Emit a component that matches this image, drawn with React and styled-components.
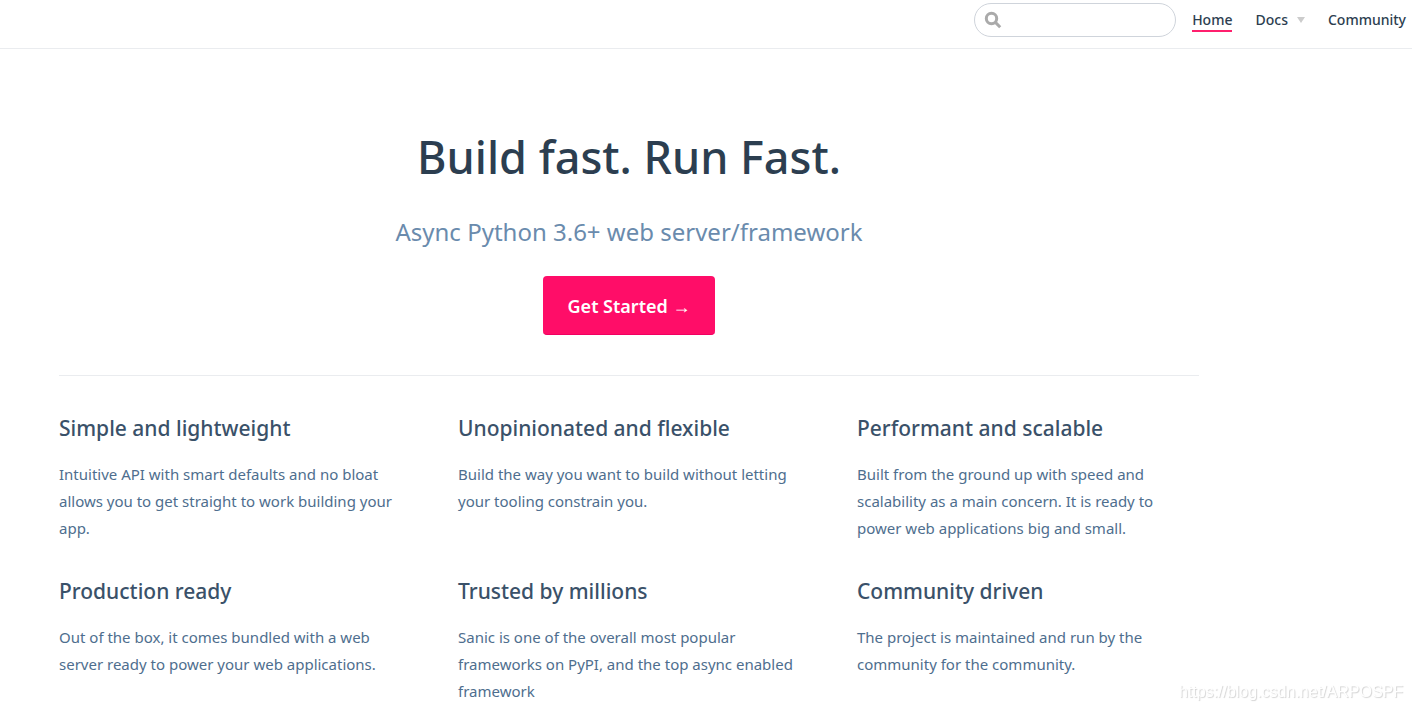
import React from "react";
import styled, { createGlobalStyle } from "styled-components";

const features = [
  {
    title: "Simple and lightweight",
    details:
      "Intuitive API with smart defaults and no bloat allows you to get straight to work building your app.",
  },
  {
    title: "Unopinionated and flexible",
    details:
      "Build the way you want to build without letting your tooling constrain you.",
  },
  {
    title: "Performant and scalable",
    details:
      "Built from the ground up with speed and scalability as a main concern. It is ready to power web applications big and small.",
  },
  {
    title: "Production ready",
    details:
      "Out of the box, it comes bundled with a web server ready to power your web applications.",
  },
  {
    title: "Trusted by millions",
    details:
      "Sanic is one of the overall most popular frameworks on PyPI, and the top async enabled framework",
  },
  {
    title: "Community driven",
    details:
      "The project is maintained and run by the community for the community.",
  },
];

const Feature = ({ title, details }) => {
  return (
    <FeatureItem>
      <h2>{title}</h2>
      <p>{details}</p>
    </FeatureItem>
  );
};

const App = () => {
  return (
    <>
      <GlobalStyle />
      <Navbar>
        <SearchBox>
          <svg width="18" height="18" viewBox="0 0 18 18" aria-hidden="true">
            <circle cx="7.5" cy="7.5" r="5.2" />
            <path d="M11.4 11.4L16.2 16.2" />
          </svg>
          <SearchInput type="search" aria-label="Search" />
        </SearchBox>
        <NavLinks>
          <NavLink href="#home" $active>
            Home
          </NavLink>
          <DropdownButton type="button">
            Docs
            <Arrow />
          </DropdownButton>
          <NavLink href="#community">Community</NavLink>
        </NavLinks>
      </Navbar>

      <Main>
        <Container>
          <Hero>
            <h1>Build fast. Run Fast.</h1>
            <p>Async Python 3.6+ web server/framework</p>
            <ActionLink href="#get-started">Get Started →</ActionLink>
          </Hero>
          <Features>
            {features.map((feature) => (
              <Feature key={feature.title} {...feature} />
            ))}
          </Features>
        </Container>
      </Main>
      <Watermark>https://blog.csdn.net/ARPOSPF</Watermark>
    </>
  );
};

export default App;

const GlobalStyle = createGlobalStyle`
  * {
    box-sizing: border-box;
  }
  body {
    margin: 0;
    background: #fff;
    color: #2c3e50;
    font-family: "Segoe UI", "Noto Sans", "Open Sans", sans-serif;
    font-size: 15px;
  }
  h1, h2, p {
    margin: 0;
  }
`;
const Navbar = styled.header`
  display: flex;
  justify-content: flex-end;
  align-items: flex-start;
  gap: 16px;
  padding: 3px 6px 11px;
  border-bottom: 1px solid #eaecef;
`;
const SearchBox = styled.div`
  display: flex;
  align-items: center;
  gap: 8px;
  width: 202px;
  height: 34px;
  padding: 0 12px 0 9px;
  border: 1px solid #cfd4db;
  border-radius: 17px;
  svg {
    flex: none;
    fill: none;
    stroke: #aaa;
    stroke-width: 3;
  }
`;
const SearchInput = styled.input`
  width: 100%;
  min-width: 0;
  border: none;
  outline: none;
  background: transparent;
  color: #4e6e8e;
  font: inherit;
`;
const NavLinks = styled.nav`
  display: flex;
  align-items: center;
  gap: 23px;
  padding-top: 7px;
`;
const NavLink = styled.a`
  border-bottom: 2px solid ${(props) => (props.$active ? "#ff1f6d" : "transparent")};
  color: #2c3e50;
  font-size: 14px;
  font-weight: 500;
  line-height: 20px;
  text-decoration: none;
`;
const DropdownButton = styled.button`
  display: flex;
  align-items: center;
  gap: 9px;
  padding: 0 0 2px;
  border: none;
  background: none;
  color: #2c3e50;
  font-family: inherit;
  font-size: 14px;
  font-weight: 500;
  line-height: 20px;
  cursor: pointer;
`;
const Arrow = styled.span`
  border-left: 4px solid transparent;
  border-right: 4px solid transparent;
  border-top: 6px solid #ccc;
`;
const Main = styled.main`
  padding: 0 154px 0 0;
`;
const Container = styled.div`
  max-width: 1140px;
  margin: 0 auto;
`;
const Hero = styled.section`
  display: flex;
  flex-direction: column;
  align-items: center;
  padding: 76px 0 40px;
  text-align: center;
  h1 {
    font-size: 45px;
    font-weight: 500;
    line-height: 64px;
  }
  p {
    margin: 26px 0 27px;
    color: #6a8bad;
    font-size: 24px;
    line-height: 34px;
  }
`;
const ActionLink = styled.a`
  padding: 17px 25px 14px;
  border-bottom: 1px solid #f00061;
  border-radius: 4px;
  background: #ff0d68;
  color: #fff;
  font-size: 18px;
  font-weight: 600;
  line-height: 27px;
  text-decoration: none;
`;
const Features = styled.section`
  display: grid;
  grid-template-columns: repeat(3, 1fr);
  gap: 34px 57px;
  padding: 37px 0 6px;
  border-top: 1px solid #eaecef;
`;
const FeatureItem = styled.article`
  h2 {
    margin-bottom: 18px;
    color: #3a5169;
    font-size: 21px;
    font-weight: 500;
    line-height: 30px;
  }
  p {
    color: #4e6e8e;
    line-height: 27px;
  }
`;
const Watermark = styled.div`
  position: fixed;
  right: 9px;
  bottom: 8px;
  color: #fff;
  font-family: "Liberation Sans", Arial, sans-serif;
  font-size: 16px;
  line-height: 20px;
  text-shadow: 1px 1px 1px #d4d4d4;
`;
